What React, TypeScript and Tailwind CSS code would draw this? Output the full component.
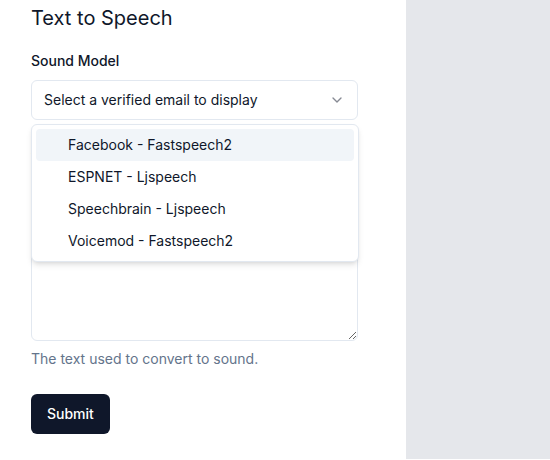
import { ChevronDown } from "lucide-react";

const models = [
  "Facebook - Fastspeech2",
  "ESPNET - Ljspeech",
  "Speechbrain - Ljspeech",
  "Voicemod - Fastspeech2",
];

export default function App() {
  return (
    <div
      className="flex h-[460px] w-[550px] overflow-hidden bg-white text-[#0f172a]"
      style={{ fontFamily: "Inter, 'Noto Sans', sans-serif" }}
    >
      <div className="w-[406px] shrink-0 px-[31px] pt-1">
        <h1 className="text-xl leading-7">Text to Speech</h1>

        <form className="mt-[19px] flex w-[327px] flex-col" onSubmit={(e) => e.preventDefault()}>
          <label className="text-sm font-medium leading-5">Sound Model</label>
          <div className="relative mt-[9px]">
            <button
              type="button"
              className="flex h-10 w-full items-center justify-between rounded-md border border-[#e2e8f0] bg-white px-3 text-sm"
            >
              <span>Select a verified email to display</span>
              <ChevronDown className="h-4 w-4 opacity-50" />
            </button>

            <div className="absolute left-0 top-full z-10 mt-1 w-[328px] rounded-md border border-[#e2e8f0] bg-white p-1 shadow-md">
              {models.map((m, i) => (
                <div
                  key={m}
                  className={
                    "rounded-sm py-1.5 pl-8 pr-2 text-sm leading-5 " +
                    (i === 0 ? "bg-[#f1f5f9]" : "")
                  }
                >
                  {m}
                </div>
              ))}
            </div>
          </div>

          <label className="mt-8 text-sm font-medium leading-none">Text</label>
          <textarea
            className="mt-2 h-[167px] w-full rounded-md border border-[#e2e8f0] bg-white px-3 py-2 text-sm outline-none"
            placeholder=""
          />
          <p className="mt-2 text-sm leading-5 text-[#64748b]">
            The text used to convert to sound.
          </p>

          <div className="mt-[25px]">
            <button
              type="submit"
              className="h-10 rounded-md bg-[#0f172a] px-4 text-sm font-medium text-white"
            >
              Submit
            </button>
          </div>
        </form>
      </div>
      <div className="h-[459px] flex-1 bg-[#e5e7eb]" />
    </div>
  );
}
